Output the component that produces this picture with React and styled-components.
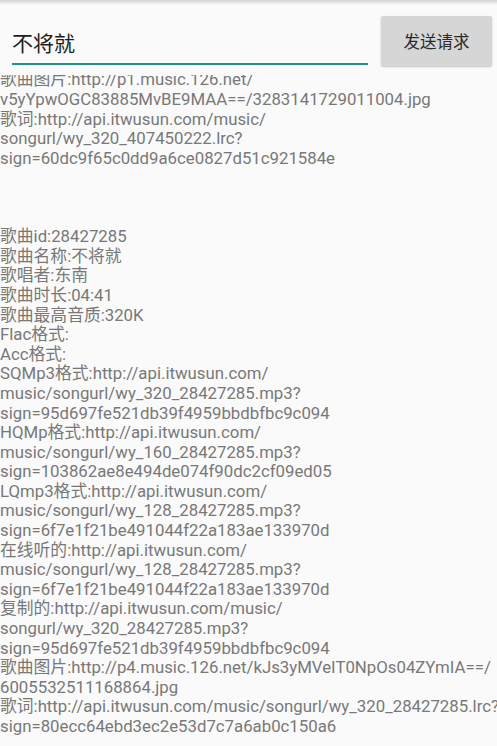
import styled, { createGlobalStyle } from "styled-components";

const GlobalStyle = createGlobalStyle`
  html, body {
    margin: 0;
    padding: 0;
    background: #fafafa;
  }
  body {
    font-family: Roboto, "Noto Sans CJK SC", sans-serif;
  }
`;

const Screen = styled.div`
  width: 497px;
  height: 746px;
  display: flex;
  flex-direction: column;
  background: #fafafa;
  overflow: hidden;
`;

// shadow left by the action bar above
const BarShadow = styled.div`
  height: 5px;
  flex: none;
  background: linear-gradient(rgba(0, 0, 0, 0.16), rgba(0, 0, 0, 0));
`;

const SearchRow = styled.div`
  display: flex;
  align-items: flex-start;
  gap: 13px;
  padding: 11px 5px 0 12px;
  flex: none;
`;

const Field = styled.div`
  width: 356px;
  height: 43px;
  padding-top: 4px;
  display: flex;
  align-items: center;
  border-bottom: 2px solid #1d9484;
  font-size: 21px;
  color: #1e1e1e;
`;

const SendButton = styled.button`
  width: 111px;
  height: 50px;
  border: none;
  border-radius: 2px;
  background: #d6d6d6;
  box-shadow: 0 1px 2px rgba(0, 0, 0, 0.22);
  font-family: Roboto, "Noto Sans CJK SC", sans-serif;
  font-size: 16.5px;
  color: #2a2a2a;
  padding: 0;
`;

const Output = styled.div`
  margin-top: 9px;
  flex: 1;
  overflow: hidden;
`;

// the result text is scrolled a little, so its first line is cut at the top
const Lines = styled.div`
  margin-top: -4.6px;
`;

const Line = styled.div`
  height: 19.6px;
  line-height: 19.6px;
  font-size: 16.8px;
  color: #787878;
  white-space: nowrap;
`;

const lines = [
  "歌曲图片:http://p1.music.126.net/",
  "v5yYpwOGC83885MvBE9MAA==/3283141729011004.jpg",
  "歌词:http://api.itwusun.com/music/",
  "songurl/wy_320_407450222.lrc?",
  "sign=60dc9f65c0dd9a6ce0827d51c921584e",
  "",
  "",
  "",
  "歌曲id:28427285",
  "歌曲名称:不将就",
  "歌唱者:东南",
  "歌曲时长:04:41",
  "歌曲最高音质:320K",
  "Flac格式:",
  "Acc格式:",
  "SQMp3格式:http://api.itwusun.com/",
  "music/songurl/wy_320_28427285.mp3?",
  "sign=95d697fe521db39f4959bbdbfbc9c094",
  "HQMp格式:http://api.itwusun.com/",
  "music/songurl/wy_160_28427285.mp3?",
  "sign=103862ae8e494de074f90dc2cf09ed05",
  "LQmp3格式:http://api.itwusun.com/",
  "music/songurl/wy_128_28427285.mp3?",
  "sign=6f7e1f21be491044f22a183ae133970d",
  "在线听的:http://api.itwusun.com/",
  "music/songurl/wy_128_28427285.mp3?",
  "sign=6f7e1f21be491044f22a183ae133970d",
  "复制的:http://api.itwusun.com/music/",
  "songurl/wy_320_28427285.mp3?",
  "sign=95d697fe521db39f4959bbdbfbc9c094",
  "歌曲图片:http://p4.music.126.net/kJs3yMVeIT0NpOs04ZYmIA==/",
  "6005532511168864.jpg",
  "歌词:http://api.itwusun.com/music/songurl/wy_320_28427285.lrc?",
  "sign=80ecc64ebd3ec2e53d7c7a6ab0c150a6",
];

const App = () => {
  return (
    <>
      <GlobalStyle />
      <Screen>
        <BarShadow />
        <SearchRow>
          <Field>不将就</Field>
          <SendButton>发送请求</SendButton>
        </SearchRow>
        <Output>
          <Lines>
            {lines.map((text, i) => (
              <Line key={i}>{text || "\u00a0"}</Line>
            ))}
          </Lines>
        </Output>
      </Screen>
    </>
  );
};

export default App;
